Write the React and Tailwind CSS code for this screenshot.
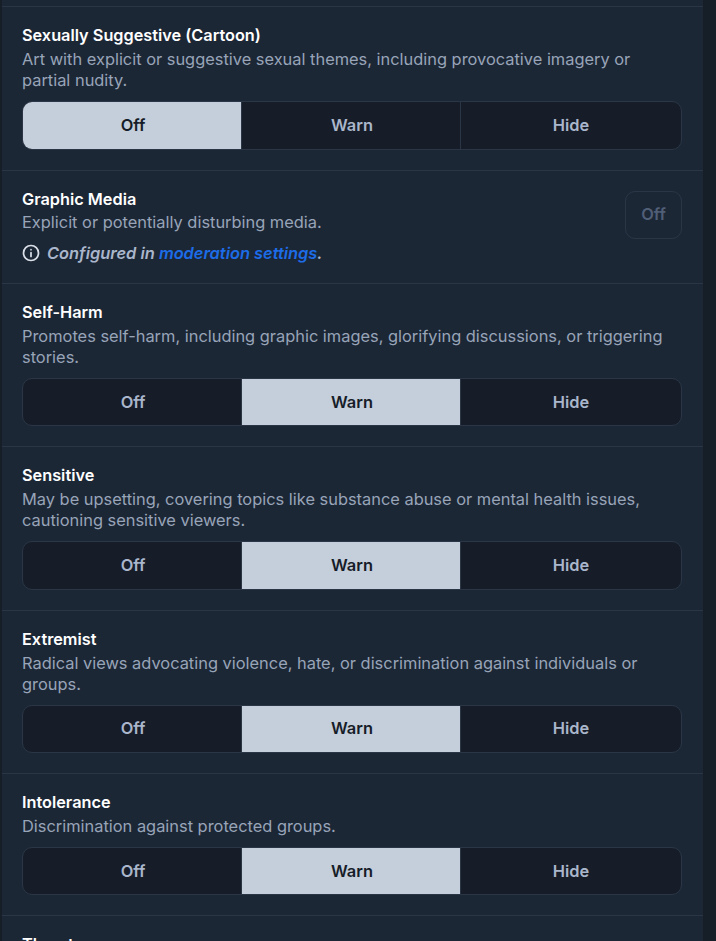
import React from 'react';

const LABELS = [
  { name: 'Sexually Suggestive (Cartoon)', desc: 'Art with explicit or suggestive sexual themes, including provocative imagery or partial nudity.', value: 'Off' },
  { name: 'Graphic Media', desc: 'Explicit or potentially disturbing media.', locked: true },
  { name: 'Self-Harm', desc: 'Promotes self-harm, including graphic images, glorifying discussions, or triggering stories.', value: 'Warn' },
  { name: 'Sensitive', desc: 'May be upsetting, covering topics like substance abuse or mental health issues, cautioning sensitive viewers.', value: 'Warn' },
  { name: 'Extremist', desc: 'Radical views advocating violence, hate, or discrimination against individuals or groups.', value: 'Warn' },
  { name: 'Intolerance', desc: 'Discrimination against protected groups.', value: 'Warn' },
];

function InfoIcon() {
  return (
    <svg width="18" height="18" viewBox="0 0 24 24" fill="none" stroke="#dbe0e8" strokeWidth="2.3" strokeLinecap="round" className="shrink-0">
      <circle cx="12" cy="12" r="10" />
      <path d="M12 11.5v5" />
      <path d="M12 7.5v.01" />
    </svg>
  );
}

function Segments({ value }) {
  return (
    <div className="mt-[10px] grid h-[48.4px] grid-cols-[218px_219px_1fr] overflow-hidden rounded-[10px] border border-[#2a3646] bg-[#161d28]">
      {['Off', 'Warn', 'Hide'].map((opt, i) => (
        <button
          key={opt}
          className={`text-[16.4px] font-semibold ${i < 2 ? 'pl-[2px]' : ''} ${i > 0 ? 'border-l border-[#2a3646]' : ''} ${
            opt === value ? 'bg-[#c5cedb] text-[#161d28]' : 'text-[#aab6cb]'
          }`}
        >
          {opt}
        </button>
      ))}
    </div>
  );
}

function Row({ label }) {
  if (label.locked) {
    return (
      <section className="flex justify-between border-t border-[#2a3646] pt-[18px] pb-[19.2px] pl-5 pr-[21px]">
        <div>
          <h3 className="text-[16.3px] leading-5 font-semibold text-white">{label.name}</h3>
          <p className="mt-[3px] text-[16.4px] leading-[21px] text-[#98a4b8]">{label.desc}</p>
          <p className="mt-[10px] flex items-center gap-[7px] text-[16.4px] leading-[21px] font-semibold text-[#aab6cb] italic">
            <InfoIcon />
            <span>
              Configured in <span className="text-[#1d6ce8]">moderation settings</span>.
            </span>
          </p>
        </div>
        <div className="mt-[2px] flex h-[48px] w-[57px] items-center justify-center rounded-[10px] border border-[#2a3646] text-[16.4px] font-semibold text-[#505e76]">
          Off
        </div>
      </section>
    );
  }
  return (
    <section className="border-t border-[#2a3646] pt-[18px] pb-5 pl-5 pr-[21px]">
      <h3 className="text-[16.3px] leading-5 font-semibold text-white">{label.name}</h3>
      <p className="mt-[4px] text-[16.4px] leading-[21px] text-[#98a4b8]">{label.desc}</p>
      <Segments value={label.value} />
    </section>
  );
}

export default function App() {
  return (
    <div className="h-[941px] overflow-hidden bg-[#161e28] font-['Inter',sans-serif]">
      <div className="ml-[2px] h-full w-[701px] bg-[#1c2736] pt-[6.2px]">
        {LABELS.map((l) => (
          <Row key={l.name} label={l} />
        ))}
        <section className="border-t border-[#2a3646] pt-[18px] pl-5 pr-[21px]">
          <h3 className="text-[16.3px] leading-5 font-semibold text-white">Threats</h3>
        </section>
      </div>
    </div>
  );
}
